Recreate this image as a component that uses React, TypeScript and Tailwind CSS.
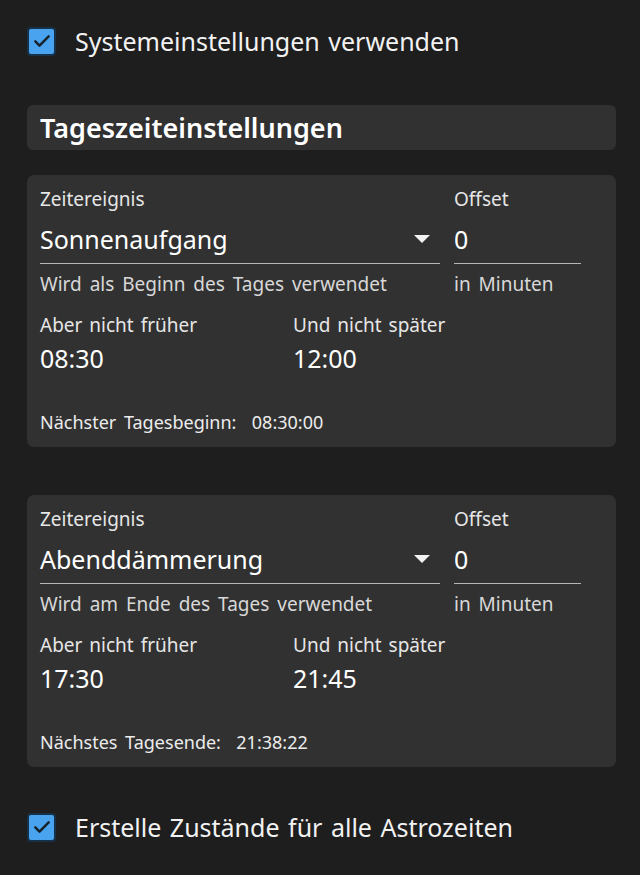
function Checkbox({ label }: { label: string }) {
  return (
    <div className="flex items-center gap-[19px]">
      <div className="w-[29px] h-[29px] rounded-[4px] bg-[#4aa3ee] border-[2px] border-[#16324a] flex items-center justify-center">
        <svg width="20" height="20" viewBox="0 0 24 24" fill="none">
          <path d="M4 12.5l5 5L20 6.5" stroke="#18222c" strokeWidth="3" strokeLinecap="round" strokeLinejoin="round" />
        </svg>
      </div>
      <span className="text-[25px] leading-8 text-[#f2f2f2] [word-spacing:2px]">{label}</span>
    </div>
  );
}

function EventCard({
  event,
  hint,
  from,
  to,
  nextLabel,
  nextValue,
}: {
  event: string;
  hint: string;
  from: string;
  to: string;
  nextLabel: string;
  nextValue: string;
}) {
  return (
    <section className="bg-[#313131] rounded-[7px] px-[13px] pt-[12px] pb-[13px]">
      <div className="grid grid-cols-[400px_127px] gap-x-[14px]">
        <div>
          <div className="text-[19px] leading-6 text-[#e6e6e6]">Zeitereignis</div>
          <div className="h-[53px] border-b border-[#b5b5b5] flex items-end justify-between pb-[8px]">
            <span className="text-[25px] leading-8 text-white">{event}</span>
            <svg width="16" height="8" viewBox="0 0 16 8" className="mr-[10px] mb-[12px]">
              <path d="M0 0h16L8 8z" fill="#f2f2f2" />
            </svg>
          </div>
          <div className="mt-[8px] text-[19px] leading-6 text-[#d8d8d8] [word-spacing:3px]">{hint}</div>
        </div>
        <div>
          <div className="text-[19px] leading-6 text-[#e6e6e6]">Offset</div>
          <div className="h-[53px] border-b border-[#b5b5b5] flex items-end pb-[8px]">
            <span className="text-[25px] leading-8 text-white">0</span>
          </div>
          <div className="mt-[8px] text-[19px] leading-6 text-[#d8d8d8] [word-spacing:3px]">in Minuten</div>
        </div>
      </div>
      <div className="mt-[17px] grid grid-cols-[253px_1fr]">
        <div>
          <div className="text-[19px] leading-6 text-[#e6e6e6] [word-spacing:2px]">Aber nicht früher</div>
          <div className="mt-[5px] text-[25px] leading-8 text-white">{from}</div>
        </div>
        <div>
          <div className="text-[19px] leading-6 text-[#e6e6e6] [word-spacing:2px]">Und nicht später</div>
          <div className="mt-[5px] text-[25px] leading-8 text-white">{to}</div>
        </div>
      </div>
      <div className="mt-[36px] text-[18px] leading-6 text-[#ececec] whitespace-pre [word-spacing:3px]">
        {nextLabel}  {nextValue}
      </div>
    </section>
  );
}

export default function App() {
  return (
    <div
      className="w-[640px] min-h-[875px] bg-[#1e1e1e] pl-[27px] pr-[24px] pt-[25px]"
      style={{ fontFamily: '"Noto Sans", "Open Sans", sans-serif' }}
    >
      <Checkbox label="Systemeinstellungen verwenden" />

      <div className="mt-[48px] h-[45px] rounded-[6px] bg-[#313131] px-[13px] flex items-center">
        <h2 className="text-[27px] font-semibold leading-8 text-white">Tageszeiteinstellungen</h2>
      </div>

      <div className="mt-[25px]">
        <EventCard
          event="Sonnenaufgang"
          hint="Wird als Beginn des Tages verwendet"
          from="08:30"
          to="12:00"
          nextLabel="Nächster Tagesbeginn:"
          nextValue="08:30:00"
        />
      </div>

      <div className="mt-[48px]">
        <EventCard
          event="Abenddämmerung"
          hint="Wird am Ende des Tages verwendet"
          from="17:30"
          to="21:45"
          nextLabel="Nächstes Tagesende:"
          nextValue="21:38:22"
        />
      </div>

      <div className="mt-[44px]">
        <Checkbox label="Erstelle Zustände für alle Astrozeiten" />
      </div>
    </div>
  );
}
